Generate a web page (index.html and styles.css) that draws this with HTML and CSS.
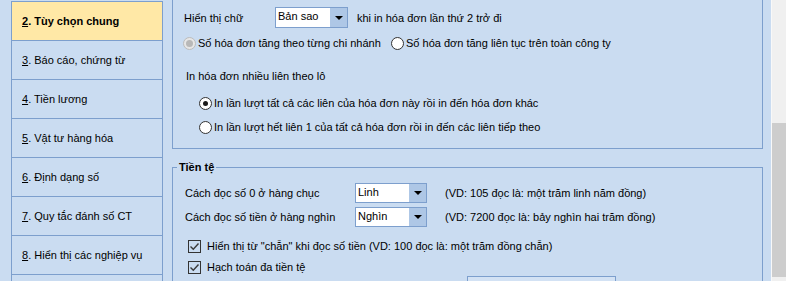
FILE: index.html
```html
<!DOCTYPE html>
<html>
<head>
<meta charset="utf-8">
<title>Tùy chọn - Tùy chọn chung</title>
<link rel="stylesheet" href="styles.css">
</head>
<body>
<div class="window">

<ul class="nav">
<li class="nav-item selected"><u>2</u>. Tùy chọn chung</li>
<li class="nav-item"><u>3</u>. Báo cáo, chứng từ</li>
<li class="nav-item"><u>4</u>. Tiền lương</li>
<li class="nav-item"><u>5</u>. Vật tư hàng hóa</li>
<li class="nav-item"><u>6</u>. Định dạng số</li>
<li class="nav-item"><u>7</u>. Quy tắc đánh số CT</li>
<li class="nav-item"><u>8</u>. Hiển thị các nghiệp vụ</li>
<li class="nav-item"></li>
</ul>

<div class="content">

<div class="group group-invoice">
<div class="row row-copy">
<span class="label label-copy">Hiển thị chữ</span>
<span class="combo combo-copy"><span class="combo-text">Bản sao</span><span class="combo-btn"><span class="arrow"></span></span></span>
<span class="after">khi in hóa đơn lần thứ 2 trở đi</span>
</div>
<div class="row row-numbering">
<span class="opt opt-wide"><span class="radio disabled"><span class="dot"></span></span>Số hóa đơn tăng theo từng chi nhánh</span>
<span class="opt"><span class="radio"></span>Số hóa đơn tăng liên tục trên toàn công ty</span>
</div>
<div class="caption">In hóa đơn nhiều liên theo lô</div>
<div class="radio-list">
<span class="opt"><span class="radio"><span class="dot"></span></span>In lần lượt tất cả các liên của hóa đơn này rồi in đến hóa đơn khác</span>
<span class="opt"><span class="radio"></span>In lần lượt hết liên 1 của tất cả hóa đơn rồi in đến các liên tiếp theo</span>
</div>
</div>

<fieldset class="group group-money">
<legend>Tiền tệ</legend>
<div class="money-body">
<div class="row row-read">
<span class="label label-read">Cách đọc số 0 ở hàng chục</span>
<span class="combo combo-read"><span class="combo-text">Linh</span><span class="combo-btn"><span class="arrow"></span></span></span>
<span class="example">(VD: 105 đọc là: một trăm linh năm đồng)</span>
</div>
<div class="row row-read row-read2">
<span class="label label-read">Cách đọc số tiền ở hàng nghìn</span>
<span class="combo combo-read"><span class="combo-text">Nghìn</span><span class="combo-btn"><span class="arrow"></span></span></span>
<span class="example">(VD: 7200 đọc là: bảy nghìn hai trăm đồng)</span>
</div>
<div class="check-list">
<span class="opt"><span class="check"><svg width="11" height="11" viewBox="0 0 11 11"><path d="M1.5 5.5 L4.3 8.3 L9.5 2.5" fill="none" stroke="#3a3a3a" stroke-width="1.4"/></svg></span>Hiển thị từ "chẵn" khi đọc số tiền (VD: 100 đọc là: một trăm đồng chẵn)</span>
<span class="opt"><span class="check"><svg width="11" height="11" viewBox="0 0 11 11"><path d="M1.5 5.5 L4.3 8.3 L9.5 2.5" fill="none" stroke="#3a3a3a" stroke-width="1.4"/></svg></span>Hạch toán đa tiền tệ</span>
</div>
<div class="button"></div>
</div>
</fieldset>

</div>

<div class="scrollbar"><div class="thumb"></div></div>

</div>
</body>
</html>
```

FILE: styles.css
```css
/* Options dialog: general page */

html, body
{ margin: 0;
padding: 0;
}

body
{ width: 786px;
height: 281px;
overflow: hidden;
background: #cadcf1;
font-family: "Liberation Sans", Arial, sans-serif;
font-size: 11px;
color: #000;
}

.window
{ display: flex;
height: 281px;
}

/* Navigation */

ul.nav
{ list-style: none;
width: 152px;
flex: none;
margin: 1px 0 0 11px;
padding: 0;
border-top: 1px solid #7d9fcd;
}

li.nav-item
{ height: 38px;
display: flex;
align-items: center;
padding-left: 10px;
border: 1px solid #7d9fcd;
border-top: none;
white-space: nowrap;
}

li.selected
{ background: #ffe8a6;
font-weight: bold;
}

/* Content */

.content
{ flex: 1;
padding: 0 8px 0 9px;
}

.group
{ border: 1px solid #7d9fcd;
}

.group-invoice
{ border-top: none;
padding: 7px 0 13px 0;
}

.row
{ display: flex;
align-items: center;
white-space: nowrap;
}

.row-copy
{ height: 21px;
padding-left: 11px;
}

.label-copy
{ width: 91px;
}

.combo
{ display: flex;
background: #fff;
border: 1px solid #7d9fcd;
box-sizing: border-box;
}

.combo-copy
{ width: 73px;
height: 21px;
}

.combo-text
{ flex: 1;
padding: 2px 0 0 2px;
}

.combo-btn
{ width: 17px;
background: #aec7e6;
display: flex;
align-items: center;
justify-content: center;
}

.arrow
{ width: 0;
height: 0;
border-left: 4px solid transparent;
border-right: 4px solid transparent;
border-top: 4px solid #000;
}

.after
{ margin-left: 9px;
}

.row-numbering
{ height: 16px;
margin-top: 7px;
padding-left: 10px;
}

.opt
{ display: flex;
align-items: center;
height: 16px;
white-space: nowrap;
}

.opt-wide
{ width: 208px;
}

.radio
{ width: 11px;
height: 11px;
border: 1px solid #333;
border-radius: 50%;
background: #fff;
margin-right: 2px;
display: flex;
align-items: center;
justify-content: center;
flex: none;
}

.radio .dot
{ width: 5px;
height: 5px;
border-radius: 50%;
background: #1a1a1a;
}

.radio.disabled
{ border-color: #bcbcbc;
background: #e6e6e6;
}

.radio.disabled .dot
{ background: #b8b8b8;
width: 7px;
height: 7px;
}

.caption
{ height: 14px;
line-height: 14px;
margin-top: 18px;
padding-left: 13px;
}

.radio-list
{ display: flex;
flex-direction: column;
gap: 8px;
margin-top: 12px;
padding-left: 26px;
}

/* Money group */

fieldset.group-money
{ margin: 11px 0 0 0;
padding: 0;
min-width: 0;
}

fieldset.group-money legend
{ font-weight: bold;
line-height: 14px;
padding: 0 2px;
margin-left: 4px;
}

.money-body
{ padding: 9px 0 0 12px;
}

.row-read
{ height: 20px;
}

.row-read2
{ margin-top: 4px;
}

.label-read
{ width: 170px;
}

.combo-read
{ width: 72px;
height: 20px;
}

.example
{ margin-left: 18px;
}

.check-list
{ display: flex;
flex-direction: column;
gap: 5px;
margin-top: 11px;
padding-left: 3px;
}

.check
{ width: 11px;
height: 11px;
border: 1px solid #333;
margin-right: 6px;
display: flex;
align-items: center;
justify-content: center;
flex: none;
}

.button
{ width: 147px;
height: 22px;
margin: 1px 0 0 282px;
border: 1px solid #7d9fcd;
background: #d3e2f4;
}

/* Scrollbar */

.scrollbar
{ width: 14px;
flex: none;
border-left: 1px solid #f8f8f8;
background: #f0f0f0;
}

.scrollbar .thumb
{ height: 154px;
margin-top: 123px;
background: #cdcdcd;
}
```
